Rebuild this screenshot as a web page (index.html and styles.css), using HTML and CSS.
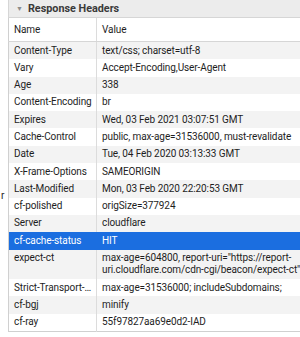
FILE: index.html
```html
<!DOCTYPE html>
<html>
<head>
  <title>Response Headers</title>
  <link rel="stylesheet" href="styles.css">
</head>
<body>
  <div class="gutter">
    <span class="stray">r</span>
  </div>

  <div class="panel">
    <div class="section-title">
      <span class="disclosure">&#9660;</span>
      <span>Response Headers</span>
    </div>

    <table class="headers">
      <colgroup>
        <col class="name-col">
        <col>
      </colgroup>
      <thead>
        <tr>
          <th>Name</th>
          <th>Value</th>
        </tr>
      </thead>
      <tbody>
        <tr><td>Content-Type</td><td>text/css; charset=utf-8</td></tr>
        <tr><td>Vary</td><td>Accept-Encoding,User-Agent</td></tr>
        <tr><td>Age</td><td>338</td></tr>
        <tr><td>Content-Encoding</td><td>br</td></tr>
        <tr><td>Expires</td><td>Wed, 03 Feb 2021 03:07:51 GMT</td></tr>
        <tr><td>Cache-Control</td><td>public, max-age=31536000, must-revalidate</td></tr>
        <tr><td>Date</td><td>Tue, 04 Feb 2020 03:13:33 GMT</td></tr>
        <tr><td>X-Frame-Options</td><td>SAMEORIGIN</td></tr>
        <tr><td>Last-Modified</td><td>Mon, 03 Feb 2020 22:20:53 GMT</td></tr>
        <tr><td>cf-polished</td><td>origSize=377924</td></tr>
        <tr><td>Server</td><td>cloudflare</td></tr>
        <tr class="selected"><td>cf-cache-status</td><td>HIT</td></tr>
        <tr><td>expect-ct</td><td>max-age=604800, report-uri="https://report-uri.cloudflare.com/cdn-cgi/beacon/expect-ct"</td></tr>
        <tr><td>Strict-Transport-Security</td><td>max-age=31536000; includeSubdomains;</td></tr>
        <tr><td>cf-bgj</td><td>minify</td></tr>
        <tr><td>cf-ray</td><td>55f97827aa69e0d2-IAD</td></tr>
      </tbody>
    </table>
  </div>
</body>
</html>
```

FILE: styles.css
```css
body {
  display: flex;
  margin: 0;
  font-family: Roboto, "Liberation Sans", sans-serif;
  font-size: 10px;
  letter-spacing: -0.1px;
  color: #1e1e1e;
  background: #fff;
  overflow: hidden;
}

.gutter {
  width: 8px;
  flex-shrink: 0;
  overflow: hidden;
}

.stray {
  display: block;
  margin-top: 190px;
  padding-left: 1px;
  line-height: 12px;
}

.panel {
  flex: 1;
  min-width: 0;
  overflow: hidden;
}

.section-title {
  display: flex;
  align-items: center;
  gap: 5px;
  width: 320px;
  height: 18px;
  padding-left: 7px;
  background-color: #ececec;
  border-left: 1px solid #d6d6d6;
  border-bottom: 1px solid #d6d6d6;
  box-sizing: border-box;
  font-weight: bold;
  font-size: 10.8px;
  letter-spacing: 0;
  color: #3a3a3a;
}

.disclosure {
  font-size: 7px;
  color: #8c8c8c;
}

.headers {
  width: 320px;
  table-layout: fixed;
  border-collapse: collapse;
  border-left: 1px solid #d0d0d0;
  border-bottom: 1px solid #d0d0d0;
}

.name-col {
  width: 88px;
}

.headers th {
  height: 23px;
  padding: 0 5px;
  text-align: left;
  font-weight: normal;
  border-bottom: 1px solid #d6d6d6;
}

.headers th:first-child,
.headers td:first-child {
  border-right: 1px solid #dcdcdc;
}

.headers td {
  padding: 2.5px 5px;
  line-height: 12.3px;
  vertical-align: top;
}

.headers td:first-child {
  padding-right: 2px;
  white-space: nowrap;
  overflow: hidden;
  text-overflow: ellipsis;
}

.headers td:last-child {
  padding-right: 14px;
}

.headers tbody tr:nth-child(odd) {
  background-color: #f3f3f3;
}

.headers tr.selected {
  background-color: #1b6ee0 !important;
  color: #fff;
}

.headers tr.selected td:first-child {
  border-right-color: #1b6ee0;
}
```
